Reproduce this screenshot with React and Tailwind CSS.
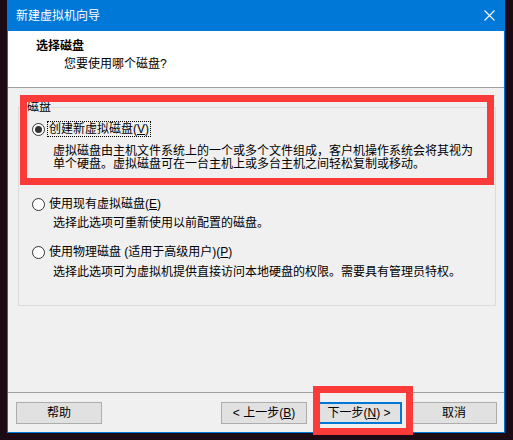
const font = { fontFamily: '"Liberation Sans", "Noto Sans CJK SC", sans-serif' };

const Radio = ({ checked }) => (
  <span className="w-[13px] h-[13px] rounded-full border border-[#333333] bg-white flex items-center justify-center shrink-0">
    {checked && <span className="w-[7px] h-[7px] rounded-full bg-[#333333]" />}
  </span>
);

const Option = ({ checked, label, mnemonic, tail = '', focus, lines, descTop }) => (
  <div>
    <div className="h-[16px] flex items-center ml-[5px]">
      <Radio checked={checked} />
      <span
        className={
          'ml-[2px] h-[16px] flex items-center px-[1px] ' +
          (focus ? 'border border-dotted border-black' : 'border border-transparent')
        }
      >
        {label}(<span className="underline">{mnemonic}</span>){tail}
      </span>
    </div>
    <div className={'ml-[26px] leading-[13px] ' + descTop}>
      {lines.map((l) => (
        <div key={l}>{l}</div>
      ))}
    </div>
  </div>
);

const Button = ({ children, primary }) => (
  <button
    className={
      'w-[86px] h-[22px] bg-[#e1e1e1] text-[12px] text-black flex items-center justify-center ' +
      (primary ? 'border-2 border-[#0078d7]' : 'border border-[#adadad]')
    }
    style={font}
  >
    {children}
  </button>
);

export default function App() {
  return (
    <div className="w-[513px] h-[440px] bg-[#1c0a14] overflow-hidden text-[12px] text-black" style={font}>
      <div className="relative ml-[7px] w-[498px] h-[433px] border-x border-b border-[#0078d7] flex flex-col bg-[#f0f0f0]">
        {/* barra de titulo */}
        <div className="h-[31px] bg-[#0078d7] flex items-center justify-between pl-[8px] pr-[9px] text-white">
          <span className="text-[12px]">新建虚拟机向导</span>
          <svg width="11" height="11" viewBox="0 0 11 11" className="block">
            <path d="M0.5 0.5 L10.5 10.5 M10.5 0.5 L0.5 10.5" stroke="white" strokeWidth="1.1" />
          </svg>
        </div>

        {/* encabezado */}
        <div className="h-[57px] bg-white border-b border-[#a0a0a0] pt-[7px]">
          <div className="pl-[28px] leading-[16px] font-bold">选择磁盘</div>
          <div className="pl-[56px] mt-[2px] leading-[16px]">您要使用哪个磁盘?</div>
        </div>

        {/* contenido */}
        <div className="h-[304px]">
          <fieldset className="ml-[10px] mr-[8px] mt-[12px] border border-[#dcdcdc] pl-[8px] pr-[8px] pb-[26px]">
            <legend className="leading-[14px]">磁盘</legend>
            <div className="mt-[7px]">
              <Option
                checked
                focus
                label="创建新虚拟磁盘"
                mnemonic="V"
                descTop="mt-[8px]"
                lines={[
                  '虚拟磁盘由主机文件系统上的一个或多个文件组成，客户机操作系统会将其视为',
                  '单个硬盘。虚拟磁盘可在一台主机上或多台主机之间轻松复制或移动。',
                ]}
              />
            </div>
            <div className="mt-[25px]">
              <Option
                label="使用现有虚拟磁盘"
                mnemonic="E"
                descTop="mt-[5px]"
                lines={['选择此选项可重新使用以前配置的磁盘。']}
              />
            </div>
            <div className="mt-[14px]">
              <Option
                label="使用物理磁盘 (适用于高级用户)"
                mnemonic="P"
                descTop="mt-[6px]"
                lines={['选择此选项可为虚拟机提供直接访问本地硬盘的权限。需要具有管理员特权。']}
              />
            </div>
          </fieldset>
        </div>

        {/* botones */}
        <div className="flex-1 border-t border-[#a0a0a0] pt-[9px] pl-[8px] pr-[7px] flex items-start">
          <Button>帮助</Button>
          <div className="ml-auto flex gap-[9px]">
            <Button>
              &lt; 上一步(<span className="underline">B</span>)
            </Button>
            <Button primary>
              下一步(<span className="underline">N</span>) &gt;
            </Button>
            <Button>取消</Button>
          </div>
        </div>

        {/* marcas rojas */}
        <div className="absolute left-[12px] top-[95px] w-[474px] h-[90px] border-[7px] border-[#fb3a3a] pointer-events-none" />
        <div className="absolute left-[305px] top-[386px] w-[100px] h-[49px] border-[7px] border-[#fb3a3a] pointer-events-none" />
      </div>
    </div>
  );
}
